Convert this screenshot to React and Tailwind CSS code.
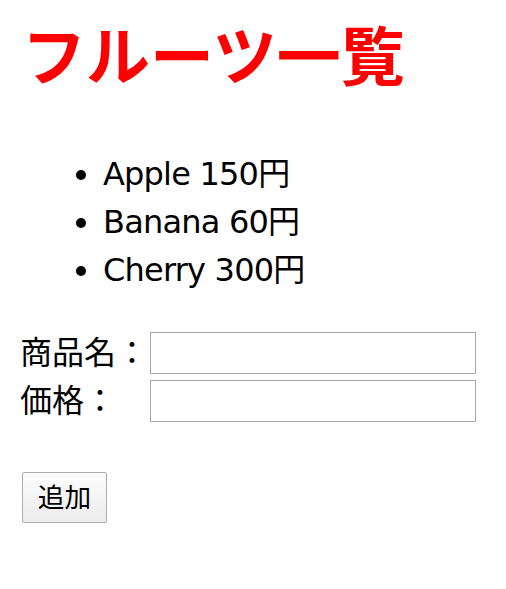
const fruits = [
  { name: "Apple", price: 150 },
  { name: "Banana", price: 60 },
  { name: "Cherry", price: 300 },
];

export default function App() {
  return (
    <div
      className="min-h-screen bg-white pl-[20px] pt-[20px] text-black"
      style={{ fontFamily: '"DejaVu Sans", "Noto Sans CJK JP", sans-serif' }}
    >
      {/* Title */}
      <h1 className="mt-[6px] pl-[2px] text-[64px] font-bold leading-[64px] text-[#ff0000]">
        フルーツ一覧
      </h1>

      {/* Fruit list */}
      <ul className="mt-[60px] list-disc pl-[83px] text-[32px] leading-[48px]">
        {fruits.map((f) => (
          <li key={f.name} className="tracking-[-0.8px]">
            {f.name} {f.price}円
          </li>
        ))}
      </ul>

      {/* Form */}
      <div className="mt-[38px] grid grid-cols-[130px_326px] gap-y-[6px] text-[32px]">
        <label className="flex h-[42px] items-center">商品名：</label>
        <input
          type="text"
          className="h-[42px] w-[326px] border border-[#a9a9a9] bg-white px-2 text-[26px] outline-none"
        />
        <label className="flex h-[42px] items-center">価格：</label>
        <input
          type="text"
          className="h-[42px] w-[326px] border border-[#a9a9a9] bg-white px-2 text-[26px] outline-none"
        />
      </div>

      <button
        type="button"
        className="mt-[50px] ml-[2px] flex h-[51px] w-[85px] items-center justify-center rounded-[2px] border border-[#adadad] bg-gradient-to-b from-[#fdfdfd] to-[#ececec] text-[26.67px]"
      >
        追加
      </button>
    </div>
  );
}
